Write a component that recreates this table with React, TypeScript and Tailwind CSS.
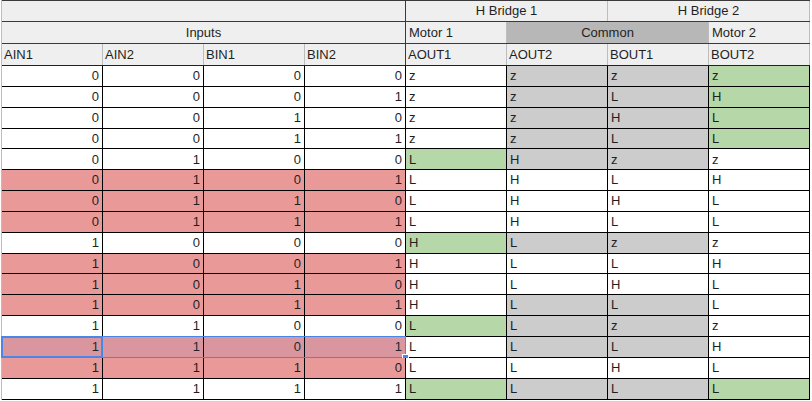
type Tone = "w" | "r" | "g" | "n";

const toneClass: Record<Tone, string> = {
  w: "bg-white",
  r: "bg-[#ea9999]",
  g: "bg-[#b6d7a8]",
  n: "bg-[#cccccc]",
};

// inputs tone, then outputs as [value, tone]
const rows: { ins: string[]; inTone: Tone; outs: [string, Tone][]; selected?: boolean }[] = [
  { ins: ["0", "0", "0", "0"], inTone: "w", outs: [["z", "w"], ["z", "n"], ["z", "n"], ["z", "g"]] },
  { ins: ["0", "0", "0", "1"], inTone: "w", outs: [["z", "w"], ["z", "n"], ["L", "n"], ["H", "g"]] },
  { ins: ["0", "0", "1", "0"], inTone: "w", outs: [["z", "w"], ["z", "n"], ["H", "n"], ["L", "g"]] },
  { ins: ["0", "0", "1", "1"], inTone: "w", outs: [["z", "w"], ["z", "n"], ["L", "n"], ["L", "g"]] },
  { ins: ["0", "1", "0", "0"], inTone: "w", outs: [["L", "g"], ["H", "n"], ["z", "n"], ["z", "w"]] },
  { ins: ["0", "1", "0", "1"], inTone: "r", outs: [["L", "w"], ["H", "w"], ["L", "w"], ["H", "w"]] },
  { ins: ["0", "1", "1", "0"], inTone: "r", outs: [["L", "w"], ["H", "w"], ["H", "w"], ["L", "w"]] },
  { ins: ["0", "1", "1", "1"], inTone: "r", outs: [["L", "w"], ["H", "w"], ["L", "w"], ["L", "w"]] },
  { ins: ["1", "0", "0", "0"], inTone: "w", outs: [["H", "g"], ["L", "n"], ["z", "n"], ["z", "w"]] },
  { ins: ["1", "0", "0", "1"], inTone: "r", outs: [["H", "w"], ["L", "w"], ["L", "w"], ["H", "w"]] },
  { ins: ["1", "0", "1", "0"], inTone: "r", outs: [["H", "w"], ["L", "w"], ["H", "w"], ["L", "w"]] },
  { ins: ["1", "0", "1", "1"], inTone: "r", outs: [["H", "w"], ["L", "n"], ["L", "n"], ["L", "w"]] },
  { ins: ["1", "1", "0", "0"], inTone: "w", outs: [["L", "g"], ["L", "n"], ["z", "n"], ["z", "w"]] },
  { ins: ["1", "1", "0", "1"], inTone: "r", outs: [["L", "w"], ["L", "n"], ["L", "n"], ["H", "w"]], selected: true },
  { ins: ["1", "1", "1", "0"], inTone: "r", outs: [["L", "w"], ["L", "w"], ["H", "w"], ["L", "w"]] },
  { ins: ["1", "1", "1", "1"], inTone: "w", outs: [["L", "g"], ["L", "n"], ["L", "n"], ["L", "g"]] },
];

const heads = ["AIN1", "AIN2", "BIN1", "BIN2", "AOUT1", "AOUT2", "BOUT1", "BOUT2"];

export default function App() {
  return (
    <div
      className="w-[812px] h-[401px] overflow-hidden bg-white text-[13px] text-[#1f1f1f]"
      style={{ fontFamily: '"Liberation Sans", Arial, sans-serif' }}
    >
      <div className="ml-px w-[809px] border-l border-[#bdbdbd]">
        {/* header row 1 */}
        <div className="flex h-[22px] border-t border-b border-[#3a3a3a] bg-[#efefef]">
          <div className="w-[404px] border-r border-[#3a3a3a]" />
          <div className="w-[202px] flex items-center justify-center border-r border-[#bdbdbd]">H Bridge 1</div>
          <div className="w-[202px] flex items-center justify-center border-r border-[#bdbdbd]">H Bridge 2</div>
        </div>
        {/* header row 2 */}
        <div className="flex h-[22px] border-b border-[#3a3a3a] bg-[#efefef]">
          <div className="w-[404px] flex items-center justify-center border-r border-[#3a3a3a]">Inputs</div>
          <div className="w-[101px] flex items-center px-[3px] border-r border-[#bdbdbd]">Motor 1</div>
          <div className="w-[202px] flex items-center justify-center bg-[#b7b7b7] border-r border-[#bdbdbd]">Common</div>
          <div className="w-[101px] flex items-center px-[3px] border-r border-[#bdbdbd]">Motor 2</div>
        </div>
        {/* header row 3 */}
        <div className="flex h-[22px] border-b border-[#222222] bg-[#efefef]">
          {heads.map((h, i) => (
            <div
              key={h}
              className={`w-[101px] flex items-center px-[2px] border-r ${i === 3 ? "border-[#3a3a3a]" : "border-[#bdbdbd]"}`}
            >
              {h}
            </div>
          ))}
        </div>
        {/* data */}
        {rows.map((row, ri) => (
          <div key={ri} className="relative flex h-[20.85px] border-b border-black">
            {row.ins.map((v, ci) => (
              <div
                key={ci}
                className={`w-[101px] flex items-center justify-end px-[3px] border-r border-black ${toneClass[row.inTone]}`}
              >
                {v}
              </div>
            ))}
            {row.outs.map(([v, t], ci) => (
              <div
                key={ci}
                className={`w-[101px] flex items-center px-[3px] border-r border-black ${toneClass[t]}`}
              >
                {v}
              </div>
            ))}
            {row.selected && (
              <>
                <div className="absolute left-[-1px] top-[-1px] w-[405px] bottom-[-1px] bg-[rgba(26,115,232,0.08)] border border-[#4a86e8]" />
                <div className="absolute left-[-1px] top-[-1px] w-[102px] bottom-[-1px] border-2 border-[#4a86e8]" />
                <div className="absolute left-[400px] bottom-[-4px] w-[7px] h-[7px] bg-[#4a86e8] border border-white" />
              </>
            )}
          </div>
        ))}
      </div>
    </div>
  );
}
